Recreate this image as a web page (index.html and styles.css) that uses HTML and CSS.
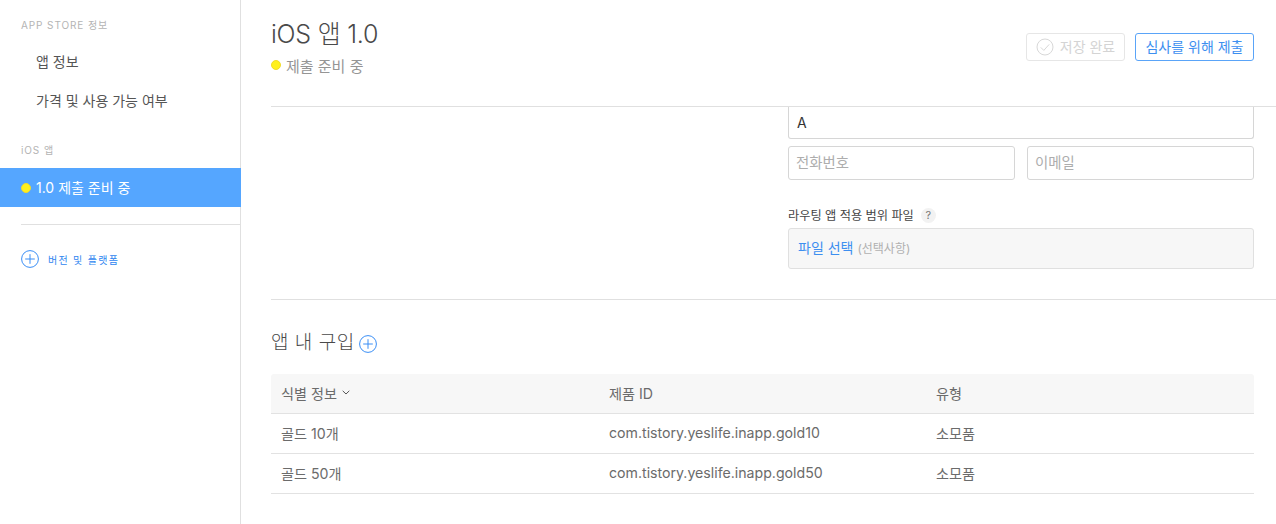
FILE: index.html
```html
<!DOCTYPE html>
<html lang="ko">
<head>
<meta charset="utf-8">
<title>iOS 앱 1.0</title>
<link rel="stylesheet" href="styles.css">
</head>
<body>
<div class="page">
  <aside class="sidebar">
    <div class="side-label first">APP STORE 정보</div>
    <a class="side-link">앱 정보</a>
    <a class="side-link">가격 및 사용 가능 여부</a>
    <div class="side-label second">iOS 앱</div>
    <a class="side-active"><span class="dot"></span>1.0 제출 준비 중</a>
    <div class="side-rule"></div>
    <a class="side-add">
      <svg class="plus-icon" width="18" height="18" viewBox="0 0 18 18"><circle cx="9" cy="9" r="8.4" fill="none" stroke="#3a8ef5" stroke-width="1"/><path d="M9 4.2v9.6M4.2 9h9.6" fill="none" stroke="#3a8ef5" stroke-width="1"/></svg>
      <span>버전 및 플랫폼</span>
    </a>
  </aside>
  <main class="main">
    <header class="head">
      <div class="head-text">
        <h1 class="title">iOS 앱 1.0</h1>
        <div class="status"><span class="dot"></span>제출 준비 중</div>
      </div>
      <div class="actions">
        <button class="btn btn-off">
          <svg width="18" height="18" viewBox="0 0 18 18"><circle cx="9" cy="9" r="8" fill="none" stroke="#d8d8d8" stroke-width="1"/><path d="M4.8 9.4l3 3 5.4-6" fill="none" stroke="#d8d8d8" stroke-width="1"/></svg>
          저장 완료
        </button>
        <button class="btn btn-on">심사를 위해 제출</button>
      </div>
    </header>
    <section class="form-sec">
      <div class="form-col">
        <div class="field field-cut">A</div>
        <div class="field-row">
          <div class="field field-ph">전화번호</div>
          <div class="field field-ph">이메일</div>
        </div>
        <div class="file-label">라우팅 앱 적용 범위 파일 <span class="help">?</span></div>
        <div class="file-box"><a class="file-link">파일 선택</a> <span class="file-note">(선택사항)</span></div>
      </div>
    </section>
    <section class="iap">
      <h2 class="iap-title">앱 내 구입
        <svg class="plus-icon" width="18" height="18" viewBox="0 0 18 18"><circle cx="9" cy="9" r="8.4" fill="none" stroke="#3a8ef5" stroke-width="1"/><path d="M9 4.2v9.6M4.2 9h9.6" fill="none" stroke="#3a8ef5" stroke-width="1"/></svg>
      </h2>
      <div class="table">
        <div class="row row-head">
          <div class="cell cell-sort">식별 정보
            <svg width="8" height="5" viewBox="0 0 8 5"><path d="M.7.8L4 4l3.3-3.2" fill="none" stroke="#555" stroke-width="1"/></svg>
          </div>
          <div class="cell">제품 ID</div>
          <div class="cell">유형</div>
        </div>
        <div class="row">
          <div class="cell">골드 10개</div>
          <div class="cell">com.tistory.yeslife.inapp.gold10</div>
          <div class="cell">소모품</div>
        </div>
        <div class="row">
          <div class="cell">골드 50개</div>
          <div class="cell">com.tistory.yeslife.inapp.gold50</div>
          <div class="cell">소모품</div>
        </div>
      </div>
    </section>
  </main>
</div>
</body>
</html>
```
FILE: styles.css
```css
* { box-sizing: border-box; }
html, body { margin: 0; height: 100%; overflow: hidden; background: #fff; }
body { font-family: Inter, "Noto Sans CJK KR", sans-serif; color: #555; font-size: 14px; }
.page { display: flex; height: 524px; }

.sidebar { width: 241px; flex: none; border-right: 1px solid #e0e0e0; display: flex; flex-direction: column; }
.side-label { font-size: 10px; line-height: 14px; letter-spacing: .9px; color: #b4b4b4; padding-left: 21px; }
.side-label.first { margin-top: 18px; margin-bottom: 11px; }
.side-label.second { margin-top: 22px; margin-bottom: 11px; }
.side-link { height: 39px; line-height: 38px; padding-left: 36px; font-size: 14px; color: #555; }
.side-active { height: 39px; display: flex; align-items: center; background: #55a6ff; color: #fff; font-size: 14px; width: 241px; padding: 0 0 2px 21px; margin-right: -1px; }
.side-active .dot { margin: 2px 5px 0 0; }
.dot { display: inline-block; width: 10px; height: 10px; border-radius: 50%; background: #fff01e; border: 1px solid #f2dc2a; flex: none; }
.side-rule { height: 1px; background: #e0e0e0; margin: 17px 0 0 21px; }
.side-add { display: flex; align-items: center; gap: 9px; margin: 25px 0 0 21px; color: #2f86f0; font-size: 10px; letter-spacing: 1.3px; }

.main { flex: 1; min-width: 0; padding-left: 30px; }
.head { height: 107px; border-bottom: 1px solid #e0e0e0; display: flex; justify-content: space-between; padding-right: 22px; }
.title { margin: 17px 0 0; font-size: 25px; line-height: 34px; font-weight: 300; color: #4a4a4a; letter-spacing: -.25px; }
.status { display: flex; align-items: center; gap: 5px; margin-top: 5px; font-size: 15px; line-height: 22px; color: #959595; }
.status .dot { position: relative; top: -2px; }
.actions { display: flex; gap: 10px; margin-top: 33px; }
.btn { height: 28px; border-radius: 3px; background: #fff; font: inherit; font-size: 14px; padding: 0 0 2px; display: flex; align-items: center; justify-content: center; }
.btn-off { width: 99px; border: 1px solid #e6e6e6; color: #d4d4d4; gap: 6px; }
.btn-on { width: 119px; border: 1px solid #5aa4f8; color: #3d8ff0; }
.btn-off svg { position: relative; top: 1px; }

.form-sec { border-bottom: 1px solid #e0e0e0; height: 193px; padding-left: 517px; }
.form-col { width: 466px; }
.field { border: 1px solid #d6d6d6; border-radius: 3px; color: #333; font-size: 14px; padding-left: 8px; }
.field-cut { height: 32px; line-height: 31px; border-top: none; border-radius: 0 0 3px 3px; }
.field-row { display: flex; gap: 12px; margin-top: 7px; }
.field-ph { flex: 1; height: 34px; line-height: 32px; font-size: 14.4px; color: #adadad; padding-left: 7px; }
.file-label { margin-top: 27px; height: 21px; font-size: 12.2px; line-height: 17px; color: #444; display: flex; align-items: flex-start; gap: 7px; }
.help { width: 15px; height: 15px; border-radius: 50%; background: #f2f2f2; color: #777; font-size: 11px; line-height: 15px; text-align: center; margin-top: 1px; }
.file-box { height: 41px; border: 1px solid #e0e0e0; border-radius: 3px; background: #f7f7f7; line-height: 37px; padding-left: 9px; font-size: 14px; }
.file-link { color: #3d8ff0; }
.file-note { color: #b0b0b0; font-size: 12px; }

.iap { padding-right: 22px; }
.iap-title { margin: 29px 0 0; height: 45px; font-size: 19px; line-height: 27px; font-weight: 300; color: #4a4a4a; display: flex; align-items: flex-start; gap: 4px; letter-spacing: .5px; }
.iap-title svg { margin-top: 6px; }
.row { display: grid; grid-template-columns: 328px 327px 1fr; height: 40px; border-bottom: 1px solid #e2e2e2; align-items: center; }
.row-head { background: #f7f7f7; border-radius: 3px 3px 0 0; }
.cell { padding: 0 0 2px 10px; font-size: 14.15px; color: #6b6b6b; }
.cell-sort { display: flex; align-items: center; gap: 5px; }
```
